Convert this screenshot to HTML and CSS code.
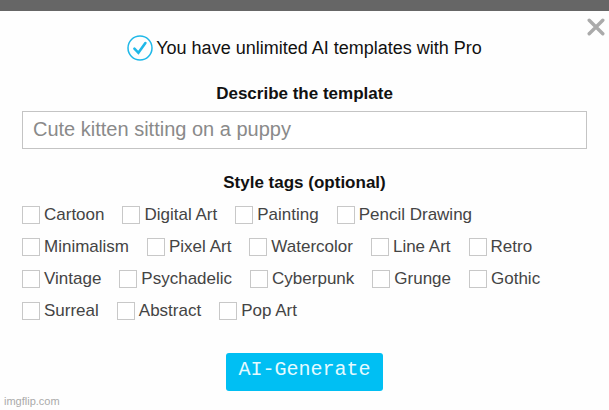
FILE: index.html
```
<!DOCTYPE html>
<html lang="en">
<head>
  <meta charset="UTF-8" />
  <meta name="viewport" content="width=device-width, initial-scale=1" />
  <title>AI Template Generator</title>
  <link rel="stylesheet" href="styles.css">
</head>
<body>
  <main class="modal">
    <button class="close-btn" type="button" aria-label="Close">
      <svg viewBox="0 0 18 18" width="18" height="18"><path d="M2.2 2.2 L15.8 15.8 M15.8 2.2 L2.2 15.8" /></svg>
    </button>

    <p class="pro-note">
      <svg class="pro-check" viewBox="0 0 26 26" width="26" height="26">
        <circle cx="13" cy="13" r="12" />
        <path d="M7.4 13.6 L11.4 17.8 L18.4 8" />
      </svg>
      <span>You have unlimited AI templates with Pro</span>
    </p>

    <form>
      <label class="heading" for="prompt">Describe the template</label>
      <input class="prompt" id="prompt" type="text" placeholder="Cute kitten sitting on a puppy" />

      <fieldset class="tags">
        <legend class="heading">Style tags (optional)</legend>
        <div class="tag-list">
          <label><input type="checkbox" />Cartoon</label>
          <label><input type="checkbox" />Digital Art</label>
          <label><input type="checkbox" />Painting</label>
          <label><input type="checkbox" />Pencil Drawing</label>
          <label><input type="checkbox" />Minimalism</label>
          <label><input type="checkbox" />Pixel Art</label>
          <label><input type="checkbox" />Watercolor</label>
          <label><input type="checkbox" />Line Art</label>
          <label><input type="checkbox" />Retro</label>
          <label><input type="checkbox" />Vintage</label>
          <label><input type="checkbox" />Psychadelic</label>
          <label><input type="checkbox" />Cyberpunk</label>
          <label><input type="checkbox" />Grunge</label>
          <label><input type="checkbox" />Gothic</label>
          <label><input type="checkbox" />Surreal</label>
          <label><input type="checkbox" />Abstract</label>
          <label><input type="checkbox" />Pop Art</label>
        </div>
      </fieldset>

      <button class="generate-btn" type="button">AI-Generate</button>
    </form>
  </main>
  <footer>imgflip.com</footer>
</body>
</html>
```
FILE: styles.css
```
* { margin: 0; padding: 0; box-sizing: border-box; }
body {
  min-height: 100vh;
  display: flex;
  flex-direction: column;
  border-top: 11px solid #666;
  background: #fefefe;
  color: #111;
  font-family: "Liberation Sans", Arial, sans-serif;
}

.modal { position: relative; flex: 1; padding: 24px 22px 0; }
.close-btn { position: absolute; top: 7px; right: 4px; width: 18px; height: 18px; border: none; background: none; cursor: pointer; }
.close-btn svg { display: block; fill: none; stroke: #aaa; stroke-width: 3.4; stroke-linecap: round; }

.pro-note { display: flex; align-items: center; justify-content: center; gap: 3px; font-size: 18px; line-height: 26px; }
.pro-check { fill: none; stroke: #1fb8e8; stroke-width: 1.5; }
.pro-check path { stroke-width: 2.6; stroke-linecap: round; }

.heading { display: block; width: 100%; text-align: center; font-size: 17px; font-weight: bold; line-height: 20px; }
form > .heading { margin-top: 23px; }

.prompt { display: block; width: 100%; height: 38px; margin-top: 7px; padding: 0 10px 2px; border: 1px solid #c4c4c4; background: #fff; color: #333; font-family: inherit; font-size: 20px; }
.prompt::placeholder { color: #8a8a8a; opacity: 1; }

/* tags */
.tags { margin-top: 24px; border: none; }
.tag-list { display: flex; flex-wrap: wrap; gap: 12px 18px; padding-top: 12px; color: #444; font-size: 17px; line-height: 20px; }
.tag-list label { display: flex; align-items: center; gap: 4px; cursor: pointer; }
.tag-list input { appearance: none; width: 18px; height: 18px; border: 1px solid #c8c8c8; background: #fff; }
.tag-list input:checked { background: #00bff3; }

.generate-btn { display: block; margin: 32px auto 0; padding: 4px 12px 8px; border: none; border-radius: 3px; background: #00bff3; color: #e4faff; font-family: "Liberation Mono", "Courier New", monospace; font-size: 20px; line-height: 26px; cursor: pointer; }

footer { padding: 0 4px 2px; color: #aaa; font-size: 11px; line-height: 14px; }
```
